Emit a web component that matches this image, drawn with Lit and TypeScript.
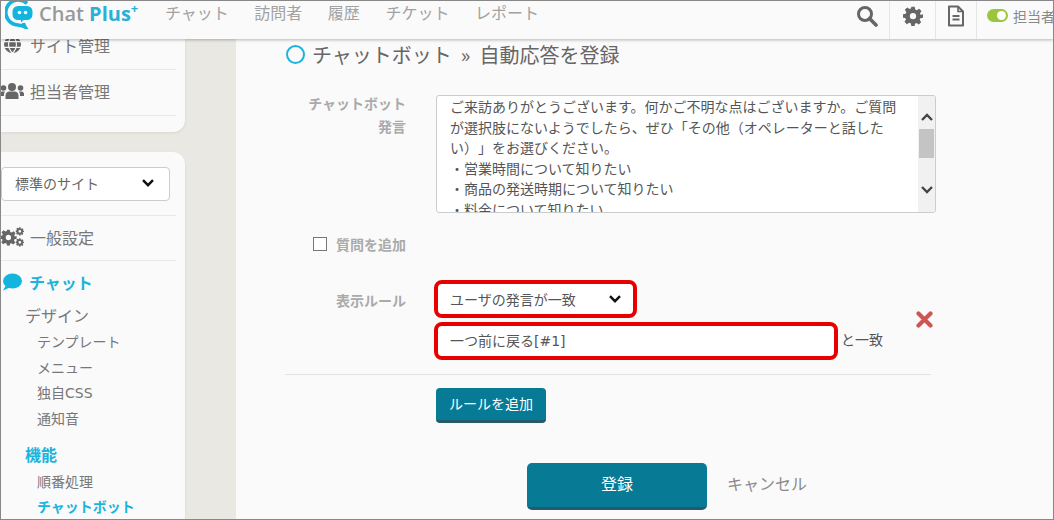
import { LitElement, html, css, svg } from "lit";
import { customElement } from "lit/decorators.js";

const chevron = svg`<svg width="14" height="10" viewBox="0 0 14 10"><path d="M2 2.200 7 7.200 12 2.200" fill="none" stroke="#111" stroke-width="2.400"/></svg>`;

const gear = (s: number, c = "#666") => svg`<svg width="${s}" height="${s}" viewBox="0 0 24 24"><path fill="${c}" fill-rule="evenodd" d="M10 1h4l.7 3.200 1.900.8 2.800-1.800 2.800 2.800-1.800 2.800.8 1.900L24 10v4l-3.200.7-.8 1.900 1.800 2.800-2.800 2.800-2.800-1.800-1.900.8L14 24h-4l-.7-3.200-1.900-.8-2.800 1.800-2.800-2.800 1.800-2.800-.8-1.900L0 14v-4l3.200-.7.8-1.900L2.200 4.600 5 1.800l2.800 1.800 1.900-.8zM12 8.300a3.800 3.800 0 1 0 0 7.600 3.800 3.800 0 0 0 0-7.600z"/></svg>`;

@customElement("app-root")
export class AppRoot extends LitElement {
  static styles = css`
    :host { display: block; width: 1054px; height: 520px; }
    * { box-sizing: border-box; }
    .frame {
      width: 1054px; height: 520px; border: 1px solid #888; overflow: hidden;
      display: flex; flex-direction: column; background: #fafafa;
      font-family: "Noto Sans CJK JP", "Noto Sans", sans-serif; color: #666; position: relative;
      text-spacing-trim: space-all;
    }
    .lat { font-family: "DejaVu Sans", sans-serif; }
    header {
      height: 38px; flex: none; display: flex; align-items: stretch; background: #fafafa;
      box-shadow: 0 1px 3px rgba(0,0,0,.28); position: relative; z-index: 2;
    }
    .logo { display: flex; align-items: flex-start; padding-left: 4px; width: 164px; gap: 4px; }
    .logo svg { margin-top: -2px; flex: none; }
    .logotext { font-family: "Open Sans", sans-serif; font-size: 20px; font-weight: 600; color: #999; white-space: nowrap; line-height: 25px; }
    .logotext b { color: #2ab0d8; font-weight: 700; }
    .logotext sup { color: #2ab0d8; font-size: 13px; font-weight: 700; line-height: 0; vertical-align: 8px; }
    nav { display: flex; gap: 25.500px; flex: 1; align-items: center; font-size: 16px; color: #a2a2a2; padding-bottom: 16px; }
    .tool { display: flex; align-items: center; justify-content: center; border-right: 1px solid #e6e6e6; padding-bottom: 9px; flex: none; }
    .t1 { width: 46px; } .t2 { width: 46px; } .t3 { width: 41px; }
    .status { width: 76px; flex: none; display: flex; align-items: center; gap: 5px; padding: 0 0 9px 10px; font-size: 14px; color: #888; white-space: nowrap; overflow: hidden; }
    .toggle { width: 21px; height: 13px; border-radius: 7px; background: #9bc53d; flex: none; display: flex; align-items: center; justify-content: flex-end; padding-right: 2px; }
    .toggle i { width: 9px; height: 9px; border-radius: 50%; background: #fff; display: block; }

    .body { flex: 1; display: flex; min-height: 0; }
    aside { width: 235px; flex: none; background: #e9e8e3; padding-right: 51px; display: flex; flex-direction: column; gap: 20px; height: 700px; }
    .card { background: #fafafa; box-shadow: 0 1px 3px rgba(0,0,0,.08); }
    .c1 { height: 93px; border-radius: 0 0 12px 0; padding: 8px 9px 0 0; }
    .c2 { flex: 1; border-radius: 0 12px 0 0; padding: 15px 15px 0 0; }
    .row { display: flex; align-items: center; gap: 6px; height: 46px; padding-bottom: 4px; border-bottom: 1px solid #e8e8e8; font-size: 16px; color: #777; white-space: nowrap; }
    .row svg { flex: none; }
    .first { margin-top: -23px; }
    .globe { margin-left: 2px; }
    .firstLabel { margin-left: 2px; }
    .people { margin-left: -1px; }
    .c2 .div, .c2 .row { margin-right: -6px; }
    .sel {
      height: 34px; width: 169px; background: #fff; border: 1px solid #ccc; border-radius: 4px;
      display: flex; align-items: center; justify-content: space-between; padding: 0 14px 2px 13px; font-size: 14px; color: #666;
    }
    .div { height: 15px; border-bottom: 1px solid #e8e8e8; }
    .gen { height: 45px; padding-bottom: 2px; }
    .gen svg { margin-left: -1px; }
    .chat { font-size: 16px; font-weight: 700; color: #1cb4dc; display: flex; align-items: center; gap: 6px; height: 44px; padding-bottom: 2px; }
    .l1 { font-size: 16px; color: #777; padding-left: 24px; height: 20px; line-height: 20px; margin: 0 0 4px; }
    .l2 { font-size: 14px; color: #777; padding-left: 36px; height: 25.670px; line-height: 24px; }
    .l1b { font-size: 16px; font-weight: 700; color: #1cb4dc; padding-left: 24px; height: 24px; line-height: 22px; margin: 11px 0 2px; }
    .l2.on { font-weight: 700; color: #1cb4dc; }

    main { flex: 1; padding: 1px 0 0 50px; min-width: 0; }
    h1 { margin: 0; height: 30px; padding-bottom: 2px; font-size: 20px; font-weight: 400; color: #666; display: flex; align-items: center; gap: 7px; white-space: nowrap; }
    .raquo { margin: 0 9px; }
    .ring { width: 19px; height: 19px; border: 2px solid #1cb4dc; border-radius: 50%; flex: none; }
    .form { display: grid; grid-template-columns: 120px 500px; column-gap: 30px; margin-top: 25px; }
    .lab { text-align: right; font-size: 14px; font-weight: 700; color: #aaa; line-height: 23px; margin-top: -3px; }
    .ta {
      height: 118px; border: 1px solid #ccc; border-radius: 3px; background: #fff; overflow: hidden;
      display: flex; font-size: 14px; color: #555; line-height: 20.600px;
    }
    .tatext { flex: 1; padding: 0 10px 0 13px; }
    .sb { width: 17px; background: #f1f1f1; display: flex; flex-direction: column; align-items: center; position: relative; padding-top: 33px; }
    .th { width: 15px; height: 29px; background: #c4c4c4; }
    .up { position: absolute; top: 16px; }
    .dn { position: absolute; bottom: 17px; }
    .check { grid-column: 1; display: flex; justify-content: flex-end; align-items: center; gap: 9px; height: 20px; margin-top: 21px; font-size: 14px; font-weight: 700; color: #aaa; }
    .box { width: 14px; height: 14px; border: 1.500px solid #777; background: #fff; }
    .ruleLab { margin-top: 26px; padding-top: 10px; line-height: 20px; }
    .rule { margin-top: 26px; grid-column: 2; position: relative; padding-bottom: 14px; margin-left: -2px; }
    .red { border: 4px solid #e60000; border-radius: 8px; background: #fff; height: 38px; display: flex; align-items: center; font-size: 14px; color: #555; }
    .r1 { width: 203px; justify-content: space-between; padding: 0 11px 1px 12px; margin-bottom: 4px; }
    .r2row { display: flex; align-items: center; gap: 3px; font-size: 14px; color: #555; }
    .r2row > span { padding-bottom: 5px; }
    .r2 { width: 404px; padding: 0 12px 2px; flex: none; }
    .x { position: absolute; left: 482px; top: 31px; }
    .hr { width: 646px; height: 1px; background: #e2e2e2; margin-left: -1px; }
    .add {
      display: flex; width: 110px; height: 35px; margin: 13px 0 0 150px; padding: 0 0 3px; align-items: center; justify-content: center;
      background: #077a96; border: 0; border-bottom: 3px solid #275a68; border-radius: 4px; color: #fff; font: 14px "Noto Sans CJK JP", sans-serif;
    }
    .actions { display: flex; align-items: center; margin: 40px 0 0 241px; gap: 20px; }
    .submit {
      width: 180px; height: 47px; background: #077a96; border: 0; border-bottom: 3px solid #275a68; border-radius: 5px;
      color: #fff; font: 16px "Noto Sans CJK JP", sans-serif; padding: 0 0 4px;
    }
    .cancel { font-size: 16px; color: #8a8a8a; padding-bottom: 7px; }
  `;

  render() {
    return html`<div class="frame">
      <header>
        <div class="logo">
          <svg width="30" height="30" viewBox="0 0 30 30">
            <path d="M22 4.500A12.500 12.500 0 1 0 13 26c2 .3 5 1 7 2-1-1.500-1.500-2.700-1.600-4" fill="none" stroke="#13b5de" stroke-width="3.600"/>
            <path d="M13 7h9a5.500 5.500 0 0 1 5.500 5.500v3A5.500 5.500 0 0 1 22 21h-3.500l-2.500 2.500V21H13a5.500 5.500 0 0 1-5.500-5.500v-3A5.500 5.500 0 0 1 13 7z" fill="#13b5de"/>
            <circle cx="14.500" cy="13.500" r="1.800" fill="#fff"/><circle cx="20.500" cy="13.500" r="1.800" fill="#fff"/>
          </svg>
          <span class="logotext">Chat <b>Plus</b><sup>+</sup></span>
        </div>
        <nav><span>チャット</span><span>訪問者</span><span>履歴</span><span>チケット</span><span>レポート</span></nav>
        <div class="tool t1"><svg width="22" height="22" viewBox="0 0 22 22"><circle cx="9" cy="9" r="6.500" fill="none" stroke="#666" stroke-width="3"/><path d="M13.500 13.500 20 20" stroke="#666" stroke-width="3.600" stroke-linecap="round"/></svg></div>
        <div class="tool t2">${gear(20)}</div>
        <div class="tool t3"><svg width="16" height="22" viewBox="0 0 16 22"><path d="M1 1.500h9l5 5v14H1z" fill="none" stroke="#666" stroke-width="2" stroke-linejoin="round"/><path d="M10 1.500v5h5" fill="none" stroke="#666" stroke-width="1.600"/><path d="M4.500 11h7M4.500 14.500h7" stroke="#666" stroke-width="2"/></svg></div>
        <div class="status"><span class="toggle"><i></i></span><span>担当者</span></div>
      </header>
      <div class="body">
        <aside>
          <div class="card c1">
            <div class="row first"><svg class="globe" width="19" height="19" viewBox="0 0 20 20"><circle cx="10" cy="10" r="9" fill="#666"/><path d="M1 7h18M1 13h18M10 1c-5.500 5-5.500 13 0 18M10 1c5.500 5 5.500 13 0 18" fill="none" stroke="#fafafa" stroke-width="1.200"/></svg><span class="firstLabel">サイト管理</span></div>
            <div class="row"><svg class="people" width="24" height="18" viewBox="0 0 24 18"><circle cx="12" cy="5" r="4" fill="#666"/><circle cx="3.500" cy="6" r="2.800" fill="#666"/><circle cx="20.500" cy="6" r="2.800" fill="#666"/><path d="M5.500 17v-3.500c0-2.500 2-4 4-4h5c2 0 4 1.500 4 4V17z" fill="#666"/><path d="M0 14v-2c0-1.500 1-2.500 2.500-2.500h2.700c-1 1-1.200 2-1.200 4.500zM24 14v-2c0-1.500-1-2.500-2.500-2.500h-2.700c1 1 1.200 2 1.200 4.500z" fill="#666"/></svg><span>担当者管理</span></div>
          </div>
          <div class="card c2">
            <div class="sel"><span>標準のサイト</span>${chevron}</div>
            <div class="div"></div>
            <div class="row gen">
              <svg width="24" height="20" viewBox="0 0 24 20"><g transform="translate(0 2) scale(.7)">${gear(24)}</g><g transform="translate(15.500 0) scale(.36)">${gear(24)}</g><g transform="translate(15.500 11) scale(.36)">${gear(24)}</g></svg>
              <span>一般設定</span>
            </div>
            <div class="chat"><svg width="22" height="20" viewBox="0 0 22 20"><ellipse cx="11.500" cy="9" rx="9.500" ry="7.500" fill="#13b5de"/><path d="M5 13 2 18.500 10 15z" fill="#13b5de"/></svg><span>チャット</span></div>
            <div class="l1">デザイン</div>
            <div class="l2">テンプレート</div>
            <div class="l2">メニュー</div>
            <div class="l2">独自<span class="lat">CSS</span></div>
            <div class="l2">通知音</div>
            <div class="l1b">機能</div>
            <div class="l2">順番処理</div>
            <div class="l2 on">チャットボット</div>
          </div>
        </aside>
        <main>
          <h1><span class="ring"></span><span>チャットボット<span class="raquo">»</span>自動応答を登録</span></h1>
          <div class="form">
            <div class="lab">チャットボット<br>発言</div>
            <div class="ta">
              <div class="tatext">ご来訪ありがとうございます。何かご不明な点はございますか。ご質問が選択肢にないようでしたら、ぜひ「その他（オペレーターと話したい）」をお選びください。<br>・営業時間について知りたい<br>・商品の発送時期について知りたい<br>・料金について知りたい</div>
              <div class="sb">
                <svg class="up" width="14" height="10" viewBox="0 0 14 10"><path d="M2 8 7 3l5 5" fill="none" stroke="#444" stroke-width="2.400"/></svg>
                <div class="th"></div>
                <svg class="dn" width="14" height="10" viewBox="0 0 14 10"><path d="M2 2l5 5 5-5" fill="none" stroke="#444" stroke-width="2.400"/></svg>
              </div>
            </div>
            <div class="check"><span class="box"></span><span>質問を追加</span></div>
            <div></div>
            <div class="lab ruleLab">表示ルール</div>
            <div class="rule">
              <div class="red r1"><span>ユーザの発言が一致</span>${chevron}</div>
              <div class="r2row"><div class="red r2"><span>一つ前に戻る<span class="lat">[#1]</span></span></div><span>と一致</span></div>
              <svg class="x" width="17" height="17" viewBox="0 0 17 17"><path d="M2.500 2.500 14.500 14.500M14.500 2.500 2.500 14.500" stroke="#cf5555" stroke-width="4.200" stroke-linecap="round"/></svg>
            </div>
          </div>
          <div class="hr"></div>
          <button class="add">ルールを追加</button>
          <div class="actions"><button class="submit">登録</button><span class="cancel">キャンセル</span></div>
        </main>
      </div>
    </div>`;
  }
}
